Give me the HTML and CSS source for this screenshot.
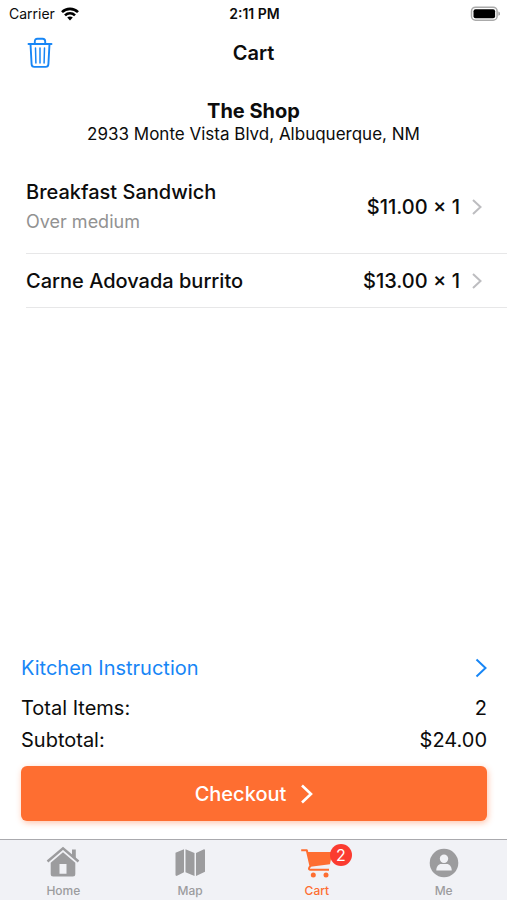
FILE: index.html
```html
<!DOCTYPE html>
<html lang="en">
<head>
<meta charset="utf-8">
<meta name="viewport" content="width=device-width, initial-scale=1">
<title>Cart</title>
<link rel="stylesheet" href="styles.css">
</head>
<body>
<div class="status">
  <span class="carrier">Carrier
    <svg width="18" height="14" viewBox="0 0 18 14" aria-hidden="true"><g fill="none" stroke="#000" stroke-width="2.600"><path d="M1 5.200C5.400.8 12.600.8 17 5.200"/><path d="M4 8.400c2.800-2.800 7.200-2.800 10 0"/></g><path d="M6.200 10.600c1.600-1.500 4-1.500 5.600 0L9 13.600z"/></svg>
  </span>
  <time class="clock">2:11 PM</time>
  <svg class="battery" width="30" height="16" viewBox="0 0 30 16" role="img" aria-label="Battery full"><rect x="1.500" y="1.200" width="25.600" height="13" rx="4" fill="#fff" stroke="#aaa" stroke-width="1.500"/><rect x="3.500" y="3.200" width="21.600" height="9" rx="2" fill="#000"/><path d="M28.300 5.600c2.400.6 2.400 3.600 0 4.200z" fill="#aaa"/></svg>
</div>
<header class="nav">
  <button class="trash" type="button" aria-label="Empty cart">
    <svg width="26" height="32" viewBox="0 0 26 32" fill="none" stroke="#1786f6" stroke-width="1.900" stroke-linecap="round" stroke-linejoin="round"><path d="M1.500 7h23M3.500 7l1.100 20.200c.1 1.700 1.100 2.700 2.700 2.700h11.400c1.600 0 2.600-1 2.700-2.700L22.500 7M7.800 7V4.500C7.800 2.800 8.800 1.700 10.400 1.700h5.200c1.600 0 2.600 1.100 2.600 2.800V7"/><path stroke-width="1.500" d="M8.500 11l.4 15M13 11v15M17.500 11l-.4 15"/></svg>
  </button>
  <h1>Cart</h1>
</header>
<main>
  <section class="shop">
    <h2>The Shop</h2>
    <p>2933 Monte Vista Blvd, Albuquerque, NM</p>
  </section>
  <ul class="items">
    <li><a class="item tall" href="#sandwich">
      <span class="name">Breakfast Sandwich<small>Over medium</small></span>
      <span class="price">$11.00 × 1</span>
      <svg width="10" height="16" viewBox="0 0 10 16" fill="none" stroke="#bdbdc0" stroke-width="2"><path d="M1 1l7.500 7L1 15"/></svg>
    </a></li>
    <li><a class="item" href="#burrito">
      <span class="name">Carne Adovada burrito</span>
      <span class="price">$13.00 × 1</span>
      <svg width="10" height="16" viewBox="0 0 10 16" fill="none" stroke="#bdbdc0" stroke-width="2"><path d="M1 1l7.500 7L1 15"/></svg>
    </a></li>
  </ul>
</main>
<section class="summary">
  <a class="kitchen" href="#kitchen">Kitchen Instruction
    <svg width="12" height="20" viewBox="0 0 12 20" fill="none" stroke="#1786f6" stroke-width="2"><path d="M1.500 1.500L10.500 10l-9 8.500"/></svg>
  </a>
  <dl>
    <div><dt>Total Items:</dt><dd>2</dd></div>
    <div><dt>Subtotal:</dt><dd>$24.00</dd></div>
  </dl>
  <button class="checkout" type="button">Checkout
    <svg width="13" height="20" viewBox="0 0 13 20" fill="none" stroke="#fff" stroke-width="2.600"><path d="M2 1.500L11 10l-9 8.500"/></svg>
  </button>
</section>
<nav class="tabs" aria-label="Main">
  <a href="#home">
    <svg width="34" height="32" viewBox="0 0 34 32" fill="#9c9c9e"><path d="M1.500 15.500L17 2.300l15.500 13.200" fill="none" stroke="#9c9c9e" stroke-width="2.400"/><path d="M26 3.500h3.800v9L26 9.200z"/><path fill-rule="evenodd" d="M17 6.300L29.300 16.700V28a2.500 2.500 0 0 1-2.500 2.500H7.200A2.500 2.500 0 0 1 4.700 28V16.700zM13.500 18v9.800h7V18z"/></svg>
    Home</a>
  <a href="#map">
    <svg width="34" height="32" viewBox="0 0 34 32" fill="#9c9c9e"><path d="M2.500 6.800L11 3.300v23L4 29.800c-1 .4-1.500 0-1.500-1zM12.500 3.300l9 3.700v23l-9-3.700zM23 7l7.500-3.600c1-.4 1.500 0 1.500 1v21.300L23 30z"/></svg>
    Map</a>
  <a class="active" href="#cart" aria-current="page">
    <span class="cart-icon"><svg width="34" height="32" viewBox="0 0 34 32" fill="#fe6e31"><path d="M1.200 4.200h5.600l3.600 15.600-1.300 2.200c-.4 1 .1 1.700 1.200 1.700H29" fill="none" stroke="#fe6e31" stroke-width="2" stroke-linejoin="round"/><path d="M7.500 6H32.500l-2.600 12.300L10.500 20.700z"/><circle cx="13.300" cy="29" r="2.500"/><circle cx="26" cy="29" r="2.500"/></svg><b class="badge">2</b></span>
    Cart</a>
  <a href="#me">
    <svg width="34" height="32" viewBox="0 0 34 32"><circle cx="17" cy="17" r="14.300" fill="#9c9c9e"/><circle cx="17" cy="12.800" r="4.200" fill="#f1f2f6"/><path d="M9.300 24.500c0-4 2.200-6.500 5-6.500h5.400c2.800 0 5 2.500 5 6.500z" fill="#f1f2f6"/></svg>
    Me</a>
</nav>
</body>
</html>
```

FILE: styles.css
```css
* { box-sizing: border-box; }
body {
  margin: 0;
  min-height: 100vh;
  display: flex;
  flex-direction: column;
  background: #fff;
  color: #0c0c0c;
  font-family: Inter, "Liberation Sans", sans-serif;
  font-size: 20px;
  line-height: 24px;
}
h1, h2, p, ul, dl, dd { margin: 0; padding: 0; }
ul { list-style: none; }
a { color: inherit; text-decoration: none; }
button { border: 0; font: inherit; cursor: pointer; }
svg { display: block; flex: none; }

.status {
  display: grid;
  grid-template-columns: 1fr auto 1fr;
  align-items: center;
  height: 27px;
  padding: 0 7px 0 9px;
  font-size: 14px;
}
.carrier { display: flex; align-items: center; gap: 6px; }
.clock { font-weight: 600; }
.battery { justify-self: end; }

.nav {
  display: grid;
  grid-template-columns: 1fr auto 1fr;
  align-items: center;
  height: 52px;
  padding: 0 27px;
}
.nav h1 { font-size: 20px; font-weight: 600; }
.trash { justify-self: start; padding: 0; background: none; }

main { flex: 1; }
.shop { padding: 20px 16px 14px; text-align: center; }
.shop h2 { font-size: 20px; font-weight: 700; }
.shop p { font-size: 17px; line-height: 22px; }

.items li { margin-left: 26px; border-bottom: 1px solid #e7e7e8; }
.item {
  display: flex;
  align-items: center;
  gap: 12px;
  min-height: 53px;
  padding-right: 25px;
  font-weight: 500;
}
.tall { min-height: 94px; padding-top: 2px; }
.name { flex: 1; }
.name small {
  display: block;
  margin-top: 6px;
  font-size: 18px;
  font-weight: 400;
  color: #929292;
}

.summary { padding: 0 20px 18px 21px; }
.kitchen {
  display: flex;
  align-items: center;
  justify-content: space-between;
  height: 44px;
  color: #1786f6;
}
dl { padding-top: 2px; }
dl div { display: flex; justify-content: space-between; line-height: 32px; }
.checkout {
  display: flex;
  align-items: center;
  justify-content: center;
  gap: 14px;
  width: 100%;
  height: 55px;
  margin-top: 10px;
  border-radius: 6px;
  background: #fe6e31;
  box-shadow: 1px 2px 6px #fe6e3166;
  color: #fff;
  font-weight: 500;
}

.tabs {
  display: grid;
  grid-template-columns: repeat(4, 1fr);
  height: 61px;
  padding-top: 6px;
  border-top: 1px solid #aaaaae;
  background: #f1f2f6;
  color: #9c9c9e;
  font-size: 12px;
  font-weight: 500;
  line-height: 14px;
}
.tabs a { display: flex; flex-direction: column; align-items: center; gap: 6px; }
.tabs .active { color: #fe6e31; }
.cart-icon { position: relative; }
.badge {
  position: absolute;
  top: -2px;
  left: 30px;
  width: 22px;
  border-radius: 11px;
  background: #fb3b30;
  color: #fff;
  font-size: 16px;
  font-weight: 400;
  line-height: 22px;
  text-align: center;
}
```
